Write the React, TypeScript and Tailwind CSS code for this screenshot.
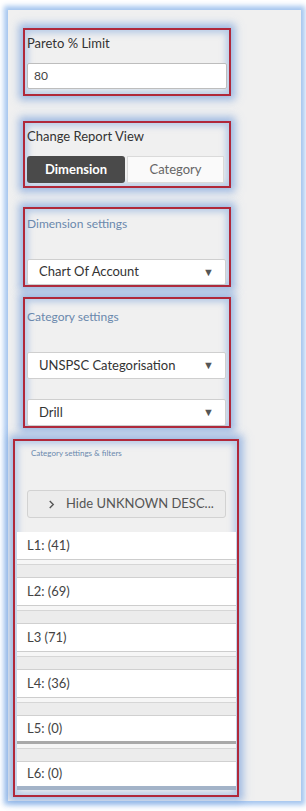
import React from 'react'

const glow =
  'border-2 border-[#b0283a] shadow-[0_0_8px_4px_rgba(120,160,220,0.7),inset_0_0_6px_3px_rgba(125,165,222,0.5)]'

function Select({ label, className = '' }: { label: string; className?: string }) {
  return (
    <div
      className={`h-[27px] w-[199px] bg-white border border-[#cfcfcf] rounded-[2px] flex items-center justify-between pl-[11px] pr-[11px] text-[13px] text-[#333] ${className}`}
    >
      <span>{label}</span>
      <span className="text-[11px] text-[#555]">▼</span>
    </div>
  )
}

function LevelRow({ label, last, heavy }: { label: string; last?: boolean; heavy?: boolean }) {
  return (
    <div className="flex flex-col">
      <div
        className={`h-[28px] bg-white flex items-center pl-[10px] text-[13px] text-[#444] ${
          heavy ? 'border-b-[3px] border-[#a9a9a9]' : last ? 'border-b-[4px] border-[#a3b3c8]' : 'border-b border-[#cdcdcd]'
        }`}
      >
        {label}
      </div>
      {!last && (
        <>
          <div className="h-[5px] bg-[#f6f6f6] border-b border-[#d6d6d6]" />
          <div className="h-[13px] bg-[#ececec] border-b border-[#d0d0d0]" />
        </>
      )}
    </div>
  )
}

export default function App() {
  return (
    <div className="w-[306px] h-[811px] bg-white pt-[10px] pl-[8px] font-['Lato',sans-serif]">
      <div className="w-[293px] h-[791px] bg-[#f0f0f0] shadow-[0_0_5px_4px_rgba(160,195,238,0.95)] pt-[18px] flex flex-col">
        {/* Pareto */}
        <div className={`ml-[15px] w-[208px] h-[68px] ${glow} px-[2px] pt-[5px] flex flex-col`}>
          <span className="text-[13px] leading-[16px] text-[#333]">Pareto % Limit</span>
          <div className="mt-[12px] h-[26px] w-[200px] bg-white border border-[#bdbdbd] rounded-[2px] flex items-center pl-[6px] text-[12px] text-[#444]">
            80
          </div>
        </div>

        {/* Change report view */}
        <div className={`mt-[25px] ml-[15px] w-[208px] h-[67px] ${glow} px-[2px] pt-[5px] flex flex-col`}>
          <span className="text-[13px] leading-[16px] text-[#333]">Change Report View</span>
          <div className="mt-[12px] h-[27px] w-[197px] flex">
            <div className="w-[98px] h-full bg-[#4a4a4a] rounded-[3px] flex items-center justify-center text-[13px] font-bold text-white">
              Dimension
            </div>
            <div className="ml-[2px] flex-1 h-full bg-[#fafafa] border border-[#dadada] flex items-center justify-center text-[13px] text-[#666]">
              Category
            </div>
          </div>
        </div>

        {/* Dimension settings */}
        <div className={`mt-[19px] ml-[15px] w-[208px] h-[80px] ${glow} px-[2px] pt-[7px] flex flex-col`}>
          <span className="text-[12px] leading-[16px] text-[#6a88ad]">Dimension settings</span>
          <Select label="Chart Of Account" className="mt-[27px]" />
        </div>

        {/* Category settings */}
        <div className={`mt-[10px] ml-[15px] w-[208px] h-[131px] ${glow} px-[2px] pt-[10px] flex flex-col`}>
          <span className="text-[12px] leading-[16px] text-[#6a88ad]">Category settings</span>
          <Select label="UNSPSC Categorisation" className="mt-[27px]" />
          <Select label="Drill" className="mt-[20px]" />
        </div>

        {/* Category settings & filters */}
        <div className={`mt-[11px] ml-[5px] w-[226px] h-[358px] ${glow} pt-[6px] flex flex-col overflow-hidden`}>
          <span className="pl-[16px] text-[8px] leading-[12px] text-[#6a88ad]">Category settings &amp; filters</span>
          <div className="mt-[31px] ml-[12px] w-[199px] h-[28px] bg-[#ececec] border border-[#d2d2d2] rounded-[3px] flex items-center pl-[20px] text-[13px] text-[#555]">
            <svg viewBox="0 0 8 10" className="w-[7px] h-[9px] mr-[11px]" fill="none" stroke="#555" strokeWidth="1.6">
              <path d="M2 1l4 4-4 4" />
            </svg>
            Hide UNKNOWN DESC...
          </div>
          <div className="mt-[14px] ml-[2px] w-[219px] flex flex-col">
            <LevelRow label="L1: (41)" />
            <LevelRow label="L2: (69)" />
            <LevelRow label="L3 (71)" />
            <LevelRow label="L4: (36)" />
            <LevelRow label="L5: (0)" heavy />
            <LevelRow label="L6: (0)" last />
          </div>
        </div>
      </div>
    </div>
  )
}
